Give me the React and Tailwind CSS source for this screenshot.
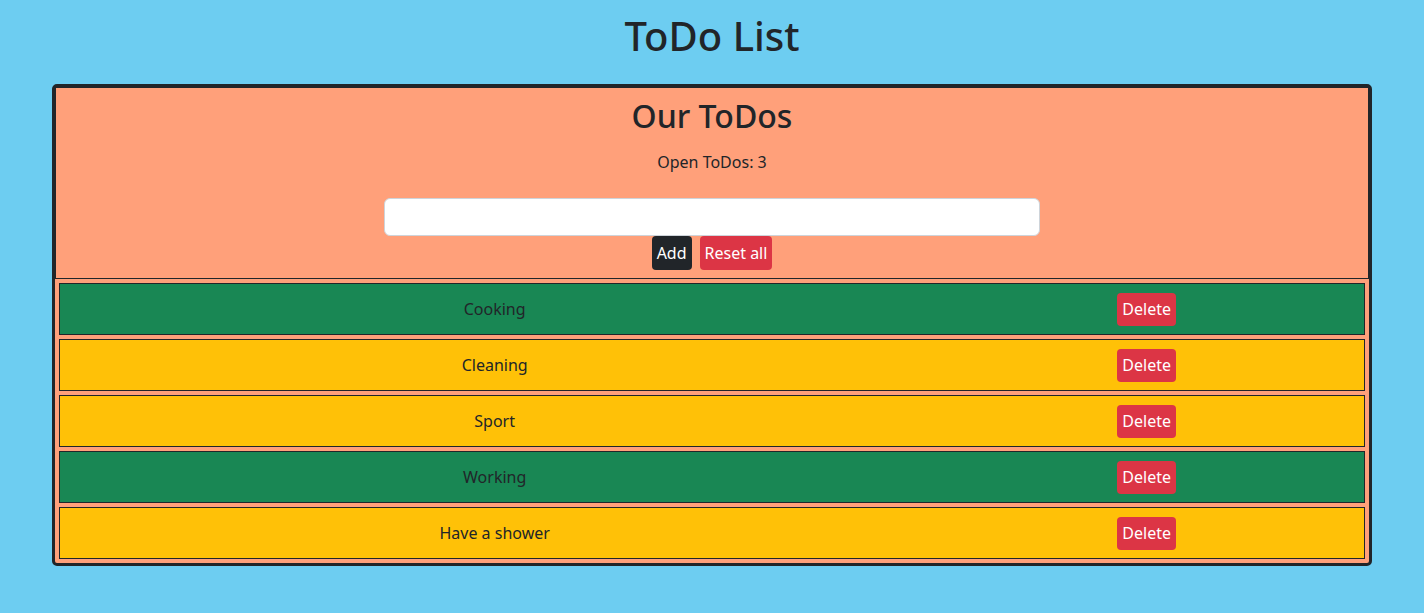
import React, { useState } from 'react';

const FONT = "font-['Noto_Sans',_'Open_Sans',_sans-serif]";

const initialTodos = [
  { title: 'Cooking', done: true },
  { title: 'Cleaning', done: false },
  { title: 'Sport', done: false },
  { title: 'Working', done: true },
  { title: 'Have a shower', done: false },
];

function TodoRow({ todo, onToggle, onDelete }) {
  return (
    <div
      className={`grid grid-cols-3 h-[52px] items-center border border-[#212529] ${
        todo.done ? 'bg-[#198754]' : 'bg-[#ffc107]'
      }`}
    >
      <div className="col-span-2 text-center cursor-pointer" onClick={onToggle}>
        {todo.title}
      </div>
      <div className="text-center">
        <button
          className="bg-[#dc3545] text-white rounded-[4px] px-[5px] h-[33px] leading-[33px]"
          onClick={onDelete}
        >
          Delete
        </button>
      </div>
    </div>
  );
}

export default function App() {
  const [todos, setTodos] = useState(initialTodos);
  const [text, setText] = useState('');
  const open = todos.filter(t => !t.done).length;

  return (
    <div className={`min-h-[613px] bg-[#6dcdf1] text-[#212529] text-base pt-[12px] ${FONT}`}>
      <h1 className="text-center text-[40px] leading-[48px] font-medium mb-[24px]">ToDo List</h1>

      <div className="w-[1320px] mx-auto border-[3px] border-[#212529] rounded-[5px] bg-[#ffa07a]">
        {/* header */}
        <div className="border border-[#212529] px-2 pt-[9px] pb-[8px] text-center">
          <h2 className="text-[32px] leading-[38px] font-medium">Our ToDos</h2>
          <p className="mt-[15px] leading-[24px]">Open ToDos: {open}</p>
          <input
            className="block w-[656px] mx-auto mt-[24px] h-[38px] bg-white border border-[#ced4da] rounded-[6px] px-3 outline-none"
            value={text}
            onChange={e => setText(e.target.value)}
          />
          <div className="flex justify-center gap-2">
            <button
              className="bg-[#212529] text-white rounded-[4px] px-[5px] h-[34px]"
              onClick={() => {
                if (!text.trim()) return;
                setTodos([...todos, { title: text.trim(), done: false }]);
                setText('');
              }}
            >
              Add
            </button>
            <button
              className="bg-[#dc3545] text-white rounded-[4px] px-[5px] h-[34px]"
              onClick={() => setTodos([])}
            >
              Reset all
            </button>
          </div>
        </div>

        {/* list */}
        <div className="p-[4px] flex flex-col gap-[4px]">
          {todos.map((t, i) => (
            <TodoRow
              key={i}
              todo={t}
              onToggle={() => setTodos(todos.map((x, j) => (j === i ? { ...x, done: !x.done } : x)))}
              onDelete={() => setTodos(todos.filter((_, j) => j !== i))}
            />
          ))}
        </div>
      </div>
    </div>
  );
}
